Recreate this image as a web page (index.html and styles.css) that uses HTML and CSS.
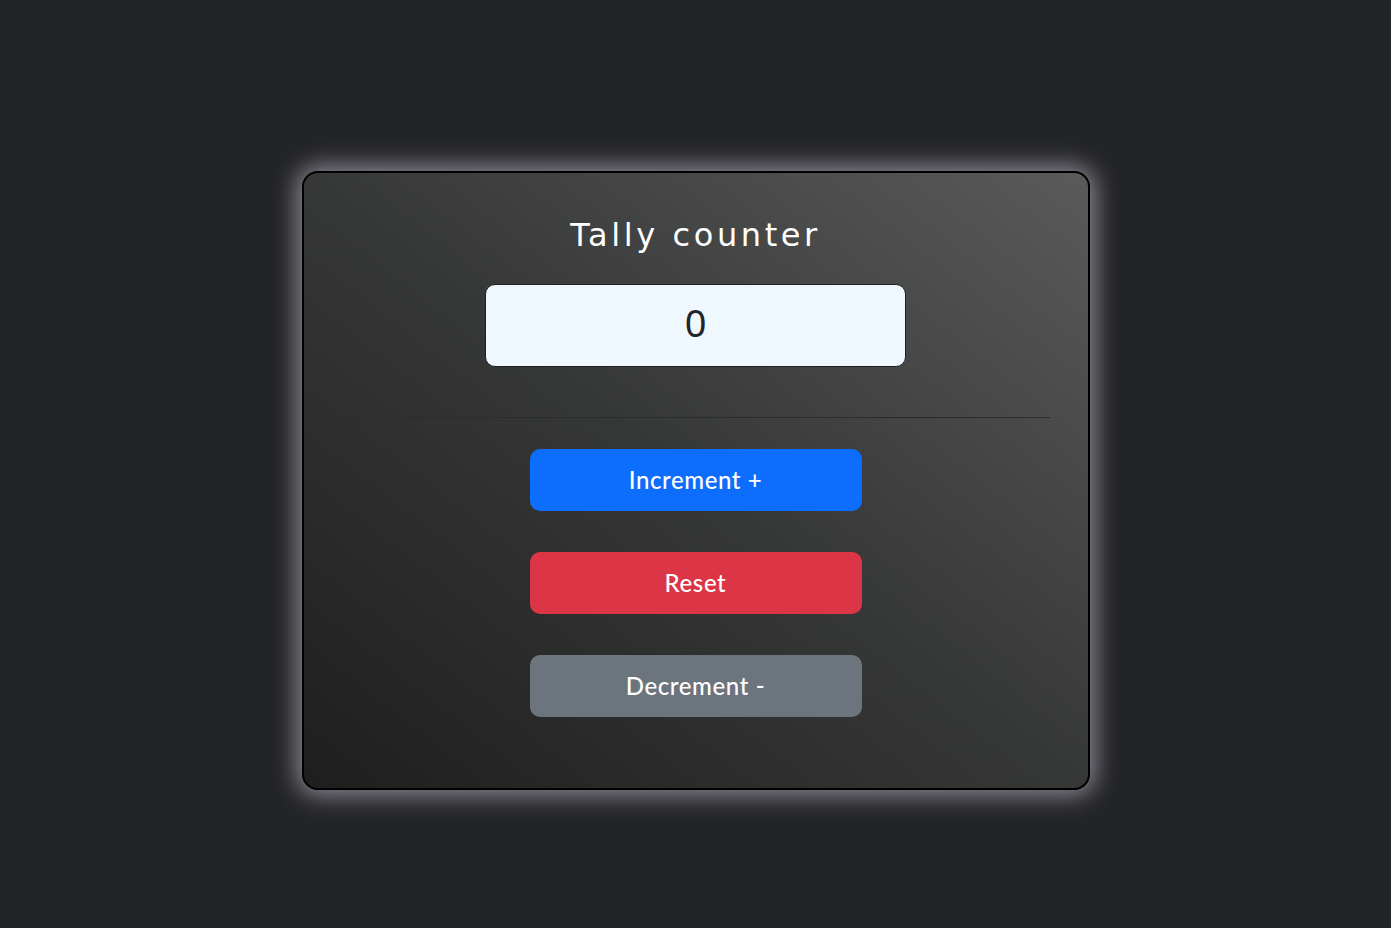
FILE: index.html
```html
<!DOCTYPE html>
<html lang="en">
<head>
<meta charset="utf-8">
<title>Tally counter</title>
<link rel="stylesheet" href="styles.css">
</head>
<body>
<main class="page">
  <section class="card">
    <h1 class="title">Tally counter</h1>
    <div class="display">0</div>
    <hr class="divider">
    <div class="actions">
      <button class="btn btn-blue">Increment +</button>
      <button class="btn btn-red">Reset</button>
      <button class="btn btn-gray">Decrement -</button>
    </div>
  </section>
</main>
</body>
</html>
```
FILE: styles.css
```css
html, body {
  margin: 0;
  padding: 0;
  height: 100%;
}
body {
  background: #232427;
  font-family: "DejaVu Sans", sans-serif;
}
.page {
  height: 100%;
  display: flex;
  justify-content: center;
  align-items: flex-start;
  padding-top: 171px;
  box-sizing: border-box;
}
.card {
  width: 788px;
  height: 619px;
  box-sizing: border-box;
  border: 2px solid #000;
  border-radius: 16px;
  background: linear-gradient(to top right, #1e1e1e 0%, #363837 50%, #595a59 100%);
  box-shadow: 0 0 24px 5px #8d8b96;
  display: flex;
  flex-direction: column;
  align-items: center;
  padding: 0 36px;
}
.title {
  margin: 40px 0 0;
  font-family: "DejaVu Sans", Verdana, sans-serif;
  font-weight: normal;
  font-size: 32px;
  letter-spacing: 3.6px;
  color: #fff;
  line-height: 44px;
}
.display {
  margin-top: 27px;
  width: 421px;
  height: 83px;
  box-sizing: border-box;
  background: #eff7ff;
  border: 1px solid #1d1f22;
  border-radius: 10px;
  color: #212529;
  font-family: "Noto Sans", "Open Sans", sans-serif;
  font-size: 38px;
  display: flex;
  align-items: center;
  justify-content: center;
  padding-bottom: 8px;
}
.divider {
  width: 708px;
  margin: 50px 0 0;
  border: 0;
  border-top: 1px solid #2b2c2c;
  height: 0;
}
.actions {
  margin-top: 31px;
  display: flex;
  flex-direction: column;
  gap: 41px;
}
.btn {
  width: 332px;
  height: 62px;
  border: 0;
  border-radius: 10px;
  color: #fff;
  font-family: Lato, "Open Sans", sans-serif;
  font-size: 24px;
  font-weight: 500;
  letter-spacing: 0.6px;
  cursor: pointer;
  padding: 0 0 2px;
}
.btn-blue { background: #0d6efd; }
.btn-red { background: #dc3545; }
.btn-gray { background: #6c757d; }
```
